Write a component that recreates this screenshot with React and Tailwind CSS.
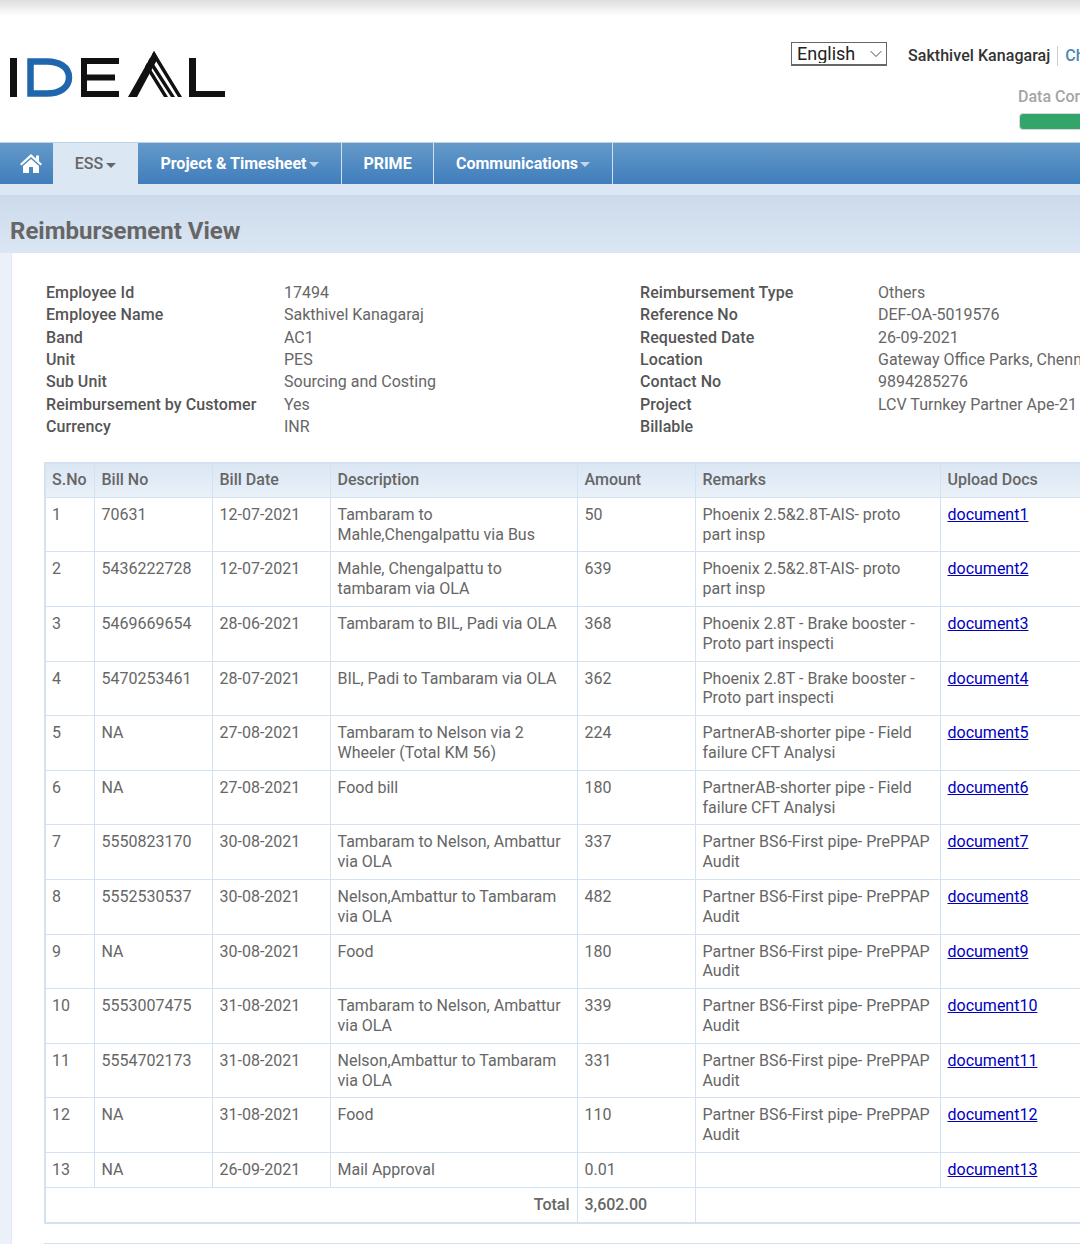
import { ChevronDown } from 'lucide-react';

const leftInfo = [
  ['Employee Id', '17494'],
  ['Employee Name', 'Sakthivel Kanagaraj'],
  ['Band', 'AC1'],
  ['Unit', 'PES'],
  ['Sub Unit', 'Sourcing and Costing'],
  ['Reimbursement by Customer', 'Yes'],
  ['Currency', 'INR'],
];

const rightInfo = [
  ['Reimbursement Type', 'Others'],
  ['Reference No', 'DEF-OA-5019576'],
  ['Requested Date', '26-09-2021'],
  ['Location', 'Gateway Office Parks, Chennai'],
  ['Contact No', '9894285276'],
  ['Project', 'LCV Turnkey Partner Ape-21'],
  ['Billable', ''],
];

const bs6 = 'Partner BS6-First pipe- PrePPAP Audit';
const rows = [
  ['1', '70631', '12-07-2021', 'Tambaram to Mahle,Chengalpattu via Bus', '50', 'Phoenix 2.5&2.8T-AIS- proto part insp'],
  ['2', '5436222728', '12-07-2021', 'Mahle, Chengalpattu to tambaram via OLA', '639', 'Phoenix 2.5&2.8T-AIS- proto part insp'],
  ['3', '5469669654', '28-06-2021', 'Tambaram to BIL, Padi via OLA', '368', 'Phoenix 2.8T - Brake booster - Proto part inspecti'],
  ['4', '5470253461', '28-07-2021', 'BIL, Padi to Tambaram via OLA', '362', 'Phoenix 2.8T - Brake booster - Proto part inspecti'],
  ['5', 'NA', '27-08-2021', 'Tambaram to Nelson via 2 Wheeler (Total KM 56)', '224', 'PartnerAB-shorter pipe - Field failure CFT Analysi'],
  ['6', 'NA', '27-08-2021', 'Food bill', '180', 'PartnerAB-shorter pipe - Field failure CFT Analysi'],
  ['7', '5550823170', '30-08-2021', 'Tambaram to Nelson, Ambattur via OLA', '337', bs6],
  ['8', '5552530537', '30-08-2021', 'Nelson,Ambattur to Tambaram via OLA', '482', bs6],
  ['9', 'NA', '30-08-2021', 'Food', '180', bs6],
  ['10', '5553007475', '31-08-2021', 'Tambaram to Nelson, Ambattur via OLA', '339', bs6],
  ['11', '5554702173', '31-08-2021', 'Nelson,Ambattur to Tambaram via OLA', '331', bs6],
  ['12', 'NA', '31-08-2021', 'Food', '110', bs6],
  ['13', 'NA', '26-09-2021', 'Mail Approval', '0.01', ''],
];

const cell = 'border border-[#d3e2f0] px-[7px] py-[7px] align-top first:pl-[6px]';
const head = 'border border-[#d3e2f0] px-[7px] pt-[6px] pb-[7px] text-left font-medium text-[#666] first:pl-[6px]';

function Logo() {
  return (
    <svg width="220" height="50" viewBox="0 0 220 50" className="block">
      <rect x="0" y="7" width="7" height="39" fill="#111" />
      <path d="M20.5 10.5H37C49 10.5 59 16 59 26.5S49 42.5 37 42.5H20.5Z" fill="none" stroke="#1f66ac" strokeWidth="6.5" />
      <path d="M71 7H109V13H77V23.5H105V29.5H77V40H109V46H71Z" fill="#111" />
      {/* A: solid left leg, striped right leg */}
      <path d="M118 46L144 0L148 7L127 46Z" fill="#111" />
      <path d="M144 0L172 46H168L142 3.5Z M140 7L165 46H161L138 10.5Z M137 12L158 46H154L135 15.5Z" fill="#111" />
      <path d="M179 7H186V40H215V46H179Z" fill="#111" />
    </svg>
  );
}

function HomeIcon() {
  return (
    <svg width="22" height="19" viewBox="0 0 22 19" fill="currentColor" className="block">
      <path d="M11 0L22 10 20.5 11.5 11 3 1.5 11.5 0 10Z" />
      <path d="M16 1.5h3v6.2l-3-2.7z" />
      <path d="M11 5l8 7v7h-6v-6H9v6H3v-7z" />
    </svg>
  );
}

function NavTab({ label, caret, className }) {
  return (
    <div className={`flex items-center justify-center font-bold text-white border-r border-[#cfe0f0] ${className}`}>
      {label}
      {caret && <span className="ml-[2px] mt-[2px] border-x-[5px] border-t-[5px] border-x-transparent border-t-[#c5d6e8]" />}
    </div>
  );
}

function InfoColumn({ items, className }) {
  return (
    <div className={className}>
      {items.map(([label, value]) => (
        <div key={label} className="flex h-[22.33px] items-center whitespace-nowrap">
          <div className="w-[238px] shrink-0 font-medium tracking-[0.08px] text-[#555]">{label}</div>
          <div className="text-[#666]">{value}</div>
        </div>
      ))}
    </div>
  );
}

export default function App() {
  return (
    <div className="h-[1244px] w-[1080px] overflow-hidden bg-white font-['Roboto',sans-serif] text-[16px] leading-[19.8px] text-[#666]">
      {/* Header */}
      <div className="h-[142px] bg-gradient-to-b from-[#dedede] via-white via-[16px] to-white">
        <div className="flex">
          <div className="w-[791px] shrink-0 pl-[10px] pt-[51px]">
            <Logo />
          </div>
          <div className="w-[400px] shrink-0 pt-[42px]">
            <div className="flex items-center">
              <div className="relative h-[24px] w-[96px] shrink-0">
                <select className="h-full w-full appearance-none border border-b-2 border-[#666] bg-white pl-[5px] text-[18px] text-[#222]">
                  <option>English</option>
                </select>
                <ChevronDown size={20} strokeWidth={1} className="pointer-events-none absolute right-[1px] top-[2px] text-[#222]" />
              </div>
              <span className="ml-[21px] mt-[3px] shrink-0 whitespace-nowrap font-medium tracking-[0.05px] text-[#333]">Sakthivel Kanagaraj</span>
              <span className="ml-[7px] mt-[3px] h-[20px] shrink-0 border-l border-[#ccc]" />
              <span className="ml-[7px] mt-[3px] shrink-0 whitespace-nowrap font-medium text-[#4d86b5]">Change Password</span>
            </div>
            <div className="ml-[227px] mt-[21px] whitespace-nowrap font-medium text-[#a5a5a5]">Data Correctness</div>
            <div className="ml-[228px] mt-[6px] h-[17px] w-[200px] rounded-[4px] border border-[#d8d8d8] bg-[#33a56b]" />
          </div>
        </div>
      </div>

      {/* Nav */}
      <div className="h-[53px] border-t border-[#bcd3e6] bg-[#dce7f4]">
        <div className="flex h-[41px] items-stretch bg-gradient-to-b from-[#659ac9] to-[#3f7dbc]">
          <div className="flex w-[53px] items-center pl-[20px] text-white">
            <HomeIcon />
          </div>
          <div className="flex h-[52px] w-[85px] items-start justify-center bg-[#dce7f4] pt-[11px] font-medium text-[#666]">
            ESS
            <span className="ml-[3px] mt-[9px] border-x-[5px] border-t-[5px] border-x-transparent border-t-[#666]" />
          </div>
          <NavTab label="Project & Timesheet" caret className="w-[204px]" />
          <NavTab label="PRIME" className="w-[92px]" />
          <NavTab label="Communications" caret className="w-[179px]" />
        </div>
      </div>

      {/* Title band */}
      <div className="h-[58px] border-t border-[#cbdaea] bg-gradient-to-b from-[#ccdbeb] to-[#dbe6f3] pl-[10px] pt-[26px] text-[24px] font-bold text-[#666]">
        Reimbursement View
      </div>

      {/* Page body */}
      <div className="bg-[#ecf1f9] pl-[11px]">
        <div className="h-[991px] border-l border-[#dde8f3] bg-white pl-[32px] pt-[28.7px]">
          <div className="flex pl-[2px]">
            <InfoColumn items={leftInfo} className="w-[594px] shrink-0" />
            <InfoColumn items={rightInfo} className="shrink-0" />
          </div>

          <table className="mt-[24px] w-[1100px] table-fixed border-collapse border-2 border-[#d3e2f0]">
            <colgroup>
              <col className="w-[49px]" />
              <col className="w-[118px]" />
              <col className="w-[118px]" />
              <col className="w-[247px]" />
              <col className="w-[118px]" />
              <col className="w-[245px]" />
              <col className="w-[205px]" />
            </colgroup>
            <thead>
              <tr className="bg-gradient-to-b from-[#dae6f3] to-[#eaf1f9]">
                {['S.No', 'Bill No', 'Bill Date', 'Description', 'Amount', 'Remarks', 'Upload Docs'].map((h) => (
                  <th key={h} className={head}>{h}</th>
                ))}
              </tr>
            </thead>
            <tbody>
              {rows.map((row) => (
                <tr key={row[0]}>
                  {row.map((value, i) => (
                    <td key={i} className={cell}>{value}</td>
                  ))}
                  <td className={cell}>
                    <a href="#" className="text-[#0000c0] underline">{`document${row[0]}`}</a>
                  </td>
                </tr>
              ))}
              <tr>
                <td colSpan={4} className={`${cell} text-right font-medium`}>Total</td>
                <td className={`${cell} font-medium`}>3,602.00</td>
                <td colSpan={2} className={cell} />
              </tr>
            </tbody>
          </table>

          <div className="mt-[19px] h-[3px] w-[1100px] border-t-2 border-[#d3e2f0]" />
        </div>
      </div>
    </div>
  );
}
